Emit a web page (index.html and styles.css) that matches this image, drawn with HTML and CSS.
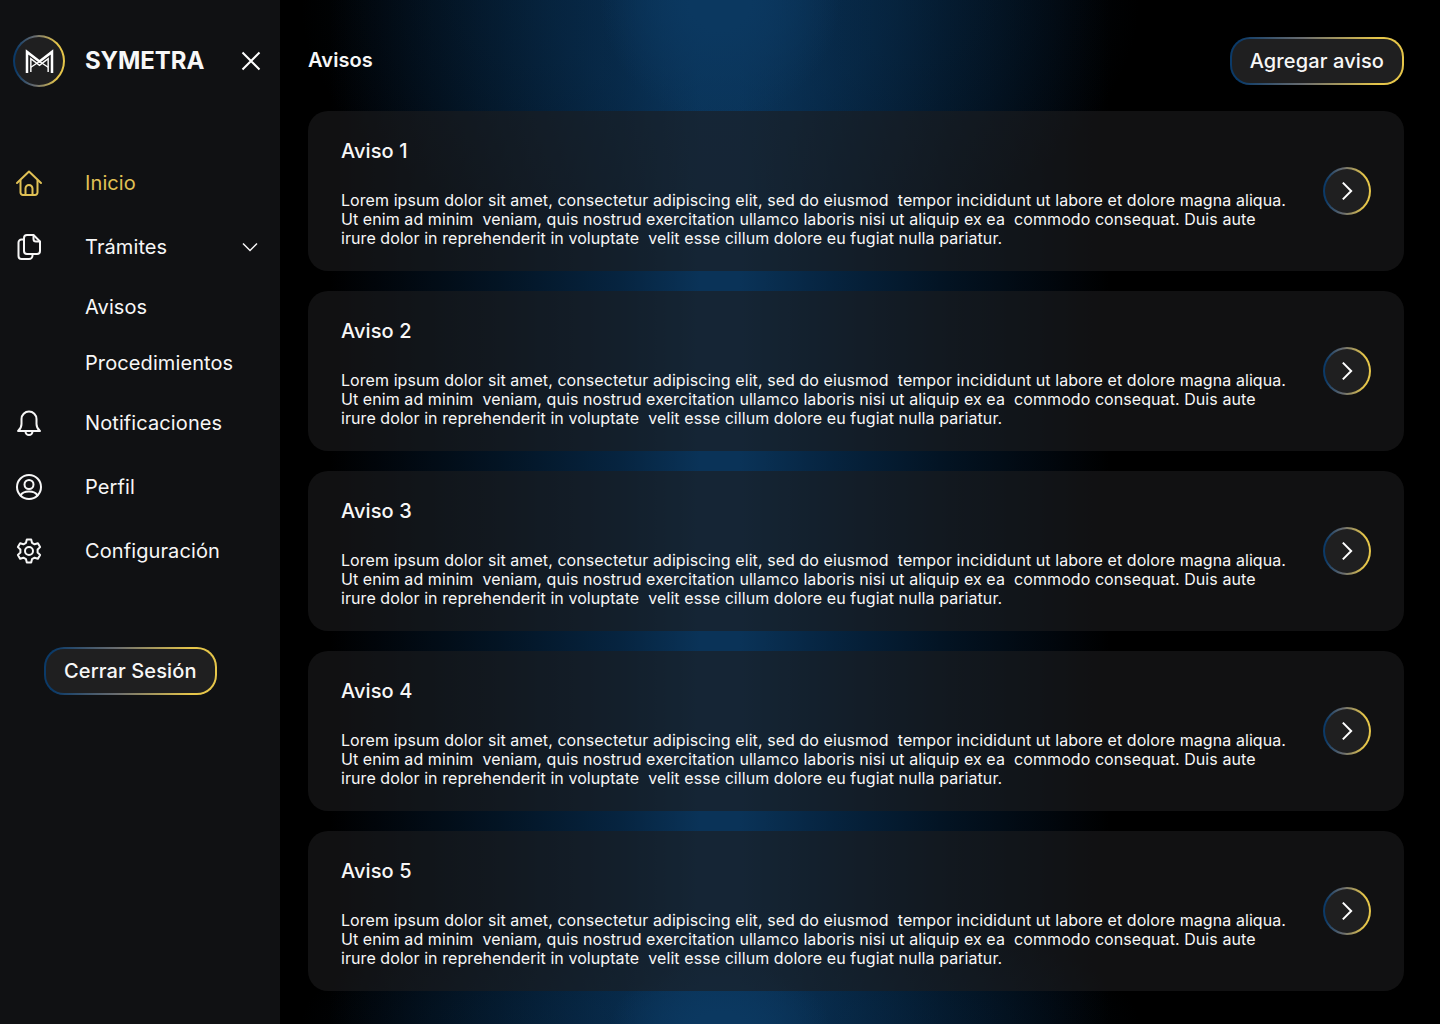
FILE: index.html
```html
<html>

<head>
  <title>Symetra - Avisos</title>
  <link rel="stylesheet" href="styles.css">
</head>

<body>
  <aside class="sidebar">
    <div class="brand">
      <div class="logo gradient-border">
        <svg viewBox="0 0 30 26" width="29" height="25" fill="none" stroke="#fff" stroke-width="2.600" stroke-linejoin="miter">
          <path d="M2 25V3L15 13L28 3V25" />
          <path d="M6 24V10L15 17L24 10V24" stroke-width="1.500" />
          <path d="M6 19L15 13L24 19" stroke-width="1.500" />
        </svg>
      </div>
      <span class="brand-name">SYMETRA</span>
      <svg class="close-icon" viewBox="0 0 20 20" width="20" height="20" fill="none" stroke="#fff" stroke-width="2">
        <path d="M1.500 1.500L18.500 18.500M18.500 1.500L1.500 18.500" />
      </svg>
    </div>

    <nav class="side-nav">
      <a href="#" class="nav-item active">
        <svg class="nav-icon" viewBox="0 0 28 28" fill="none" stroke="currentColor" stroke-width="2" stroke-linejoin="round" stroke-linecap="round">
          <path d="M2 14L14 2.500L26 14" />
          <path d="M5.500 11.500V23.500A2.500 2.500 0 0 0 8 26H20A2.500 2.500 0 0 0 22.500 23.500V11.500" />
          <path d="M10.500 26V19.500A3.500 3.500 0 0 1 17.500 19.500V26" />
        </svg>
        Inicio
      </a>
      <a href="#" class="nav-item">
        <svg class="nav-icon" viewBox="0 0 28 28" fill="none" stroke="currentColor" stroke-width="2" stroke-linejoin="round" stroke-linecap="round">
          <path d="M9 6.500H6.500A3 3 0 0 0 3.500 9.500V23A3 3 0 0 0 6.500 26H14A3.500 3.500 0 0 0 17.500 22.500V21" />
          <path d="M12 2H18.500L25 8.500V18A3 3 0 0 1 22 21H12A3 3 0 0 1 9 18V5A3 3 0 0 1 12 2Z" />
          <path d="M18.500 2.500V6A2.500 2.500 0 0 0 21 8.500H24.500" />
        </svg>
        Trámites
        <svg class="chevron-down" viewBox="0 0 16 10" width="16" height="10" fill="none" stroke="currentColor" stroke-width="1.500">
          <path d="M1 1.500L8 8.500L15 1.500" />
        </svg>
      </a>
      <a href="#" class="nav-subitem">Avisos</a>
      <a href="#" class="nav-subitem">Procedimientos</a>
      <a href="#" class="nav-item">
        <svg class="nav-icon" viewBox="0 0 28 28" fill="none" stroke="currentColor" stroke-width="2" stroke-linejoin="round" stroke-linecap="round">
          <path d="M14 2.500A7.500 7.500 0 0 0 6.500 10V15C6.500 18 5.500 20 3 22H25C22.500 20 21.500 18 21.500 15V10A7.500 7.500 0 0 0 14 2.500Z" />
          <path d="M10.500 22.500A3.500 3.500 0 0 0 17.500 22.500" />
        </svg>
        Notificaciones
      </a>
      <a href="#" class="nav-item">
        <svg class="nav-icon" viewBox="0 0 28 28" fill="none" stroke="currentColor" stroke-width="2" stroke-linecap="round">
          <circle cx="14" cy="14" r="12" />
          <circle cx="14" cy="11.500" r="4.500" />
          <path d="M5.500 22.500C7 19.500 10 18.500 14 18.500C18 18.500 21 19.500 22.500 22.500" />
        </svg>
        Perfil
      </a>
      <a href="#" class="nav-item">
        <svg class="nav-icon" viewBox="0 0 28 28" fill="none" stroke="currentColor" stroke-width="2" stroke-linejoin="round">
          <circle cx="14" cy="14" r="4" />
          <path d="M11.800 2.500H16.200L17 5.800L19.600 7.300L22.900 6.300L25.100 10.100L22.600 12.500V15.500L25.100 17.900L22.900 21.700L19.600 20.700L17 22.200L16.200 25.500H11.800L11 22.200L8.400 20.700L5.100 21.700L2.900 17.900L5.400 15.500V12.500L2.900 10.100L5.100 6.300L8.400 7.300L11 5.800Z" />
        </svg>
        Configuración
      </a>
    </nav>

    <a href="#" class="pill-btn logout-btn gradient-border">Cerrar Sesión</a>
  </aside>

  <main class="content">
    <header class="topbar">
      <h1 class="page-title">Avisos</h1>
      <a href="#" class="pill-btn gradient-border">Agregar aviso</a>
    </header>

    <section class="notice-list">
      <article class="notice-card">
        <div class="notice-text">
          <h2>Aviso 1</h2>
          <p>Lorem ipsum dolor sit amet, consectetur adipiscing elit, sed do eiusmod  tempor incididunt ut labore et dolore magna aliqua. Ut enim ad minim  veniam, quis nostrud exercitation ullamco laboris nisi ut aliquip ex ea  commodo consequat. Duis aute irure dolor in reprehenderit in voluptate  velit esse cillum dolore eu fugiat nulla pariatur.</p>
        </div>
        <a href="#" class="round-btn gradient-border">
          <svg viewBox="0 0 14 24" width="12" height="20" fill="none" stroke="#fff" stroke-width="2.400"><path d="M2 2L12 12L2 22" /></svg>
        </a>
      </article>
      <article class="notice-card">
        <div class="notice-text">
          <h2>Aviso 2</h2>
          <p>Lorem ipsum dolor sit amet, consectetur adipiscing elit, sed do eiusmod  tempor incididunt ut labore et dolore magna aliqua. Ut enim ad minim  veniam, quis nostrud exercitation ullamco laboris nisi ut aliquip ex ea  commodo consequat. Duis aute irure dolor in reprehenderit in voluptate  velit esse cillum dolore eu fugiat nulla pariatur.</p>
        </div>
        <a href="#" class="round-btn gradient-border">
          <svg viewBox="0 0 14 24" width="12" height="20" fill="none" stroke="#fff" stroke-width="2.400"><path d="M2 2L12 12L2 22" /></svg>
        </a>
      </article>
      <article class="notice-card">
        <div class="notice-text">
          <h2>Aviso 3</h2>
          <p>Lorem ipsum dolor sit amet, consectetur adipiscing elit, sed do eiusmod  tempor incididunt ut labore et dolore magna aliqua. Ut enim ad minim  veniam, quis nostrud exercitation ullamco laboris nisi ut aliquip ex ea  commodo consequat. Duis aute irure dolor in reprehenderit in voluptate  velit esse cillum dolore eu fugiat nulla pariatur.</p>
        </div>
        <a href="#" class="round-btn gradient-border">
          <svg viewBox="0 0 14 24" width="12" height="20" fill="none" stroke="#fff" stroke-width="2.400"><path d="M2 2L12 12L2 22" /></svg>
        </a>
      </article>
      <article class="notice-card">
        <div class="notice-text">
          <h2>Aviso 4</h2>
          <p>Lorem ipsum dolor sit amet, consectetur adipiscing elit, sed do eiusmod  tempor incididunt ut labore et dolore magna aliqua. Ut enim ad minim  veniam, quis nostrud exercitation ullamco laboris nisi ut aliquip ex ea  commodo consequat. Duis aute irure dolor in reprehenderit in voluptate  velit esse cillum dolore eu fugiat nulla pariatur.</p>
        </div>
        <a href="#" class="round-btn gradient-border">
          <svg viewBox="0 0 14 24" width="12" height="20" fill="none" stroke="#fff" stroke-width="2.400"><path d="M2 2L12 12L2 22" /></svg>
        </a>
      </article>
      <article class="notice-card">
        <div class="notice-text">
          <h2>Aviso 5</h2>
          <p>Lorem ipsum dolor sit amet, consectetur adipiscing elit, sed do eiusmod  tempor incididunt ut labore et dolore magna aliqua. Ut enim ad minim  veniam, quis nostrud exercitation ullamco laboris nisi ut aliquip ex ea  commodo consequat. Duis aute irure dolor in reprehenderit in voluptate  velit esse cillum dolore eu fugiat nulla pariatur.</p>
        </div>
        <a href="#" class="round-btn gradient-border">
          <svg viewBox="0 0 14 24" width="12" height="20" fill="none" stroke="#fff" stroke-width="2.400"><path d="M2 2L12 12L2 22" /></svg>
        </a>
      </article>
    </section>
  </main>
</body>

</html>
```

FILE: styles.css
```css
:root {
  --panel: #101113;
  --fill: #1f1f20;
  --gold: #e0c155;
  --text: #f7f7f7;
}

* {
  box-sizing: border-box;
}

body {
  margin: 0;
  min-height: 1024px;
  display: grid;
  grid-template-columns: 280px 1fr;
  font-family: Inter, "Liberation Sans", sans-serif;
  color: var(--text);
  background-color: #000;
  background-image:
    radial-gradient(ellipse 120px 120px at 720px 0, #0b3860 25%, rgba(11, 56, 96, 0) 100%),
    radial-gradient(ellipse 110px 60px at 720px 1024px, #0b3860 20%, rgba(11, 56, 96, 0) 100%),
    radial-gradient(ellipse 420px 260px at 720px 0, rgba(11, 56, 96, 0.3) 40%, rgba(11, 56, 96, 0) 100%),
    radial-gradient(ellipse 420px 120px at 720px 1024px, rgba(11, 56, 96, 0.3) 30%, rgba(11, 56, 96, 0) 100%),
    linear-gradient(90deg,
      #000 330px,
      #01050a 375px,
      #031424 500px,
      #062440 620px,
      #0a3358 700px,
      #0a3358 740px,
      #062440 830px,
      #031424 940px,
      #01050a 1065px,
      #000 1110px);
}

a {
  color: inherit;
  text-decoration: none;
}

.gradient-border {
  border: 2px solid transparent;
  background:
    linear-gradient(var(--fill), var(--fill)) padding-box,
    linear-gradient(90deg, #0b3a68 5%, #6a6d70 42%, #e6c64a 85%) border-box;
}

.sidebar {
  background-color: var(--panel);
  padding-top: 35px;
}

.brand {
  display: flex;
  align-items: center;
  height: 52px;
  padding-left: 13px;
}

.logo {
  width: 52px;
  height: 52px;
  border-radius: 50%;
  display: flex;
  align-items: center;
  justify-content: center;
}

.brand-name {
  margin: 0 0 2px 20px;
  font-size: 24px;
  font-weight: 700;
  letter-spacing: -0.1px;
}

.close-icon {
  margin-left: 37px;
}

.side-nav {
  display: flex;
  flex-direction: column;
  margin-top: 64px;
}

.nav-item {
  display: flex;
  align-items: center;
  height: 64px;
  padding-left: 15px;
  font-size: 20px;
  letter-spacing: 0.1px;
}

.nav-item.active {
  color: var(--gold);
}

.nav-icon {
  width: 28px;
  height: 28px;
  margin-right: 42px;
}

.chevron-down {
  margin-left: 75px;
}

.nav-subitem {
  display: flex;
  align-items: center;
  height: 56px;
  padding-left: 85px;
  font-size: 20px;
  letter-spacing: 0.1px;
}

.pill-btn {
  display: inline-flex;
  align-items: center;
  justify-content: center;
  height: 48px;
  padding: 0 18px;
  border-radius: 20px;
  font-size: 20px;
  font-weight: 500;
  letter-spacing: 0.12px;
}

.logout-btn {
  margin: 64px 0 0 44px;
}

.content {
  padding: 37px 36px 33px 28px;
}

.topbar {
  display: flex;
  align-items: center;
  justify-content: space-between;
  margin-bottom: 26px;
}

.page-title {
  margin: 0 0 2px;
  font-size: 20px;
  font-weight: 600;
  letter-spacing: 0.1px;
}

.notice-list {
  display: flex;
  flex-direction: column;
  gap: 20px;
}

.notice-card {
  display: flex;
  align-items: center;
  gap: 32px;
  height: 160px;
  padding: 0 33px;
  border-radius: 20px;
  background-color: rgba(28, 28, 30, 0.6);
}

.notice-text {
  flex: 1;
  align-self: flex-start;
  padding-top: 28px;
}

.notice-text h2 {
  margin: 0 0 28px;
  font-size: 20px;
  line-height: 24px;
  font-weight: 500;
  letter-spacing: 0.1px;
}

.notice-text p {
  margin: 0;
  font-size: 16px;
  line-height: 19px;
  white-space: pre-wrap;
  letter-spacing: 0.07px;
}

.round-btn {
  flex: none;
  width: 48px;
  height: 48px;
  border-radius: 50%;
  display: flex;
  align-items: center;
  justify-content: center;
}
```
